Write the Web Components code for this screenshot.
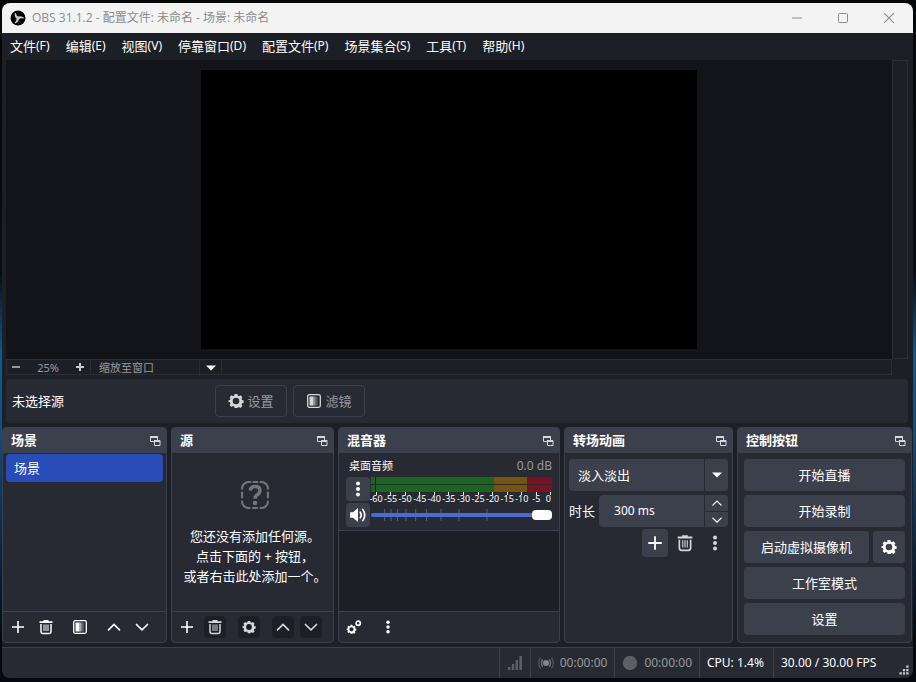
<!DOCTYPE html>
<html lang="zh-CN">
<head>
<meta charset="utf-8">
<title>OBS 31.1.2</title>
<style>
:root{
  --bg:#1d1f26;--panel:#272a33;--raise:#3c404d;--line:#3c404d;--soft:#2a2d36;
  --preview:#13141a;--accent:#284cb8;--text:#fff;--dim:#999a9e;
}
html,body{height:100%}
body{
  margin:0;box-sizing:border-box;padding:3px 3px 4px 2px;
  background:linear-gradient(180deg,#050608 0%,#0a0d12 40%,#0c5a94 52%,#0b5288 62%,#0a2c4d 78%,#05080c 94%);
  font:13px/20px "Noto Sans","Noto Sans CJK SC",sans-serif;color:var(--text);
}
</style>
</head>
<body>
<obs-window></obs-window>
<script>
const GEAR='<path fill-rule="evenodd" d="M6.6 1h2.8l.4 1.7 1.2.5 1.5-.9 1.9 1.9-.9 1.5.5 1.2 1.6.3v2.7l-1.6.4-.5 1.2.9 1.5-1.9 1.9-1.5-.9-1.2.5L9.4 15H6.600l-.4-1.500-1.200-.5-1.500.9-1.900-1.900.9-1.500-.5-1.200-1.500-.4V7.200l1.500-.3.5-1.200-.9-1.500 1.900-1.900 1.500.9 1.200-.5zM8 4.700a3.300 3.300 0 1 0 0 6.600 3.300 3.300 0 0 0 0-6.600z"/>';
const BLADE='M8 8.300Q4.900 7.200 5.300 3.500M5.300 3.500Q5.900 6.400 8.300 7.100';
const ICONS={
  plus:'<path d="M7.200 2h1.600v5.200H14v1.600H8.800V14H7.200V8.800H2V7.200h5.200z"/>',
  smallplus:'<path d="M7 4h2v3h3v2H9v3H7V9H4V7h3z"/>',
  minus:'<path d="M4 7h8v2H4z"/>',
  trash:'<path d="M5.500 1h5v1.200H14.500v1.800H1.500V2.200h4z"/><path d="M3 5v7.500a2 2 0 0 0 2 2h6a2 2 0 0 0 2-2V5" fill="none" stroke="currentColor" stroke-width="1.500"/><path d="M5.500 5.500h1V12h-1zM7.500 5.500h1V12h-1zM9.500 5.500h1V12h-1z"/>',
  filter:'<rect x="1.700" y="1.700" width="12.600" height="12.600" rx="1.500" fill="none" stroke="currentColor" stroke-width="1.300"/><path d="M3.500 3.500h4v9h-4z"/><path d="M7.500 3.500h1.500v9H7.500z" opacity=".6"/><path d="M9 3.500h1.500v9H9z" opacity=".4"/><path d="M10.500 3.500H12v9h-1.500z" opacity=".2"/>',
  up:'<path d="M2.500 10.800 8 5.500l5.500 5.300" fill="none" stroke="currentColor" stroke-width="1.700" stroke-linecap="round"/>',
  down:'<path d="M2.500 5.500 8 10.800l5.500-5.300" fill="none" stroke="currentColor" stroke-width="1.700" stroke-linecap="round"/>',
  gear:GEAR,
  cogs:'<g transform="translate(.3 5.200) scale(.64)">'+GEAR+'</g><circle cx="12.200" cy="4.300" r="2.100" fill="none" stroke="currentColor" stroke-width="1.700"/>',
  dots:'<circle cx="8" cy="2.500" r="2"/><circle cx="8" cy="8" r="2"/><circle cx="8" cy="13.500" r="2"/>',
  speaker:'<path d="M1 5.500h2.500L8 1.800v12.400L3.500 10.500H1z"/><path d="M10 5.500q1.800 2.500 0 5M12.200 3q3.600 5 0 10" fill="none" stroke="currentColor" stroke-width="1.500" stroke-linecap="round"/>',
  popout:'<path d="M7 8.500H3.500v-5h7V7" fill="none" stroke="currentColor"/><path d="M3 3h8v2H3zM7 7h6v2H7z"/><path d="M7.500 7.500h5.500v5H7.500z" fill="none" stroke="currentColor"/>',
  unknown:'<path d="M6 1.100h-1.500A3.400 3.400 0 0 0 1.100 4.500V5M6.700 1.100h3M10.500 1.100h1A3.400 3.400 0 0 1 14.900 4.500V5M14.900 6.300v3.400M14.900 11v.5a3.400 3.400 0 0 1-3.400 3.400H10.500M9.500 14.900h-3M5.500 14.900H4.500A3.400 3.400 0 0 1 1.100 11.500V11M1.100 9.700V6.300" fill="none" stroke="currentColor" stroke-width="1.100"/><path d="M5.500 5.600Q5.700 3.500 8.100 3.500q2.500 0 2.500 2.200 0 1.300-1.400 2.200Q8 8.700 8 10" fill="none" stroke="currentColor" stroke-width="1.900"/><circle cx="8" cy="12.200" r="1.200"/>',
  tri:'<path d="M3 5.500h10L8 10.500z"/>',
  bars:'<path d="M1 12h2.400v3H1zM4.800 9h2.400v6H4.800zM8.600 5H11v10H8.600zM12.400 1h2.600v14h-2.600z"/>',
  stream:'<circle cx="8" cy="8" r="3" fill="#85878c"/><path d="M4.700 4.300q-2.400 3.700 0 7.400M11.300 4.300q2.400 3.700 0 7.400" fill="none" stroke="#74767c" stroke-width="1.400"/><path d="M2.500 2.500q-3.600 5.500 0 11M13.500 2.500q3.600 5.500 0 11" fill="none" stroke="#4c4f58" stroke-width="1.400"/>',
  record:'<circle cx="8" cy="8" r="7.200"/>',
  grip:'<path d="M11 2h3v3h-3zM11 6.500h3v3h-3zM11 11h3v3h-3zM6.500 6.500h3v3h-3zM6.500 11h3v3h-3zM2 11h3v3H2z"/>',
  min:'<path d="M3 7.500h10v1H3z"/>',
  max:'<rect x="3.500" y="3.500" width="9" height="9" rx="1" fill="none" stroke="currentColor"/>',
  close:'<path d="m3.200 3.200 9.600 9.600m0-9.600-9.600 9.600" stroke="currentColor" stroke-width="1.100"/>',
  obs:'<circle cx="8" cy="8" r="7.500" fill="#000"/><g fill="none" stroke="#ccc" stroke-width="1.200" stroke-linecap="round">'+[0,120,240].map(r=>`<path d="${BLADE}" transform="rotate(${r} 8 8)"/>`).join('')+'</g>'
};
const RESET=`*{box-sizing:border-box}
button,input,select{font:inherit;color:inherit;margin:0;padding:0;border:0;background:none;appearance:none;outline:0;min-width:0}
button{display:inline-flex;align-items:center;justify-content:center}`;
function define(name,css,html){
  customElements.define(name,class extends HTMLElement{
    constructor(){
      super();
      const t=document.createElement('template');
      t.innerHTML=`<style>${RESET}${css}</style>${html}`;
      this.attachShadow({mode:'open'}).append(t.content.cloneNode(true));
    }
  });
}
customElements.define('obs-icon',class extends HTMLElement{
  connectedCallback(){
    if(this.shadowRoot)return;
    const s=this.getAttribute('size')||16;
    this.attachShadow({mode:'open'}).innerHTML=`<style>:host{display:inline-flex;flex:none}svg{display:block;fill:currentColor}</style><svg width="${s}" height="${s}" viewBox="0 0 16 16" aria-hidden="true">${ICONS[this.getAttribute('name')]}</svg>`;
  }
});
customElements.define('obs-tool',class extends HTMLElement{
  connectedCallback(){
    if(this.shadowRoot)return;
    this.attachShadow({mode:'open'}).innerHTML=`<style>${RESET}
    :host{display:inline-flex;width:22px;height:22px}
    button{width:100%;height:100%;border-radius:4px}
    :host([dark]) button{background:var(--bg);color:#d6d7da}
    :host([raised]) button{background:var(--raise)}
    :host([gap]){margin-left:6px}</style>
    <button aria-label="${this.getAttribute('label')}"><obs-icon name="${this.getAttribute('icon')}" size="${this.getAttribute('size')||16}"></obs-icon></button>`;
  }
});
customElements.define('obs-dock',class extends HTMLElement{
  connectedCallback(){
    if(this.shadowRoot)return;
    this.attachShadow({mode:'open'}).innerHTML=`<style>${RESET}
    :host{display:flex;flex-direction:column;min-width:0;background:var(--panel);border:1px solid var(--line);border-radius:4px;overflow:hidden}
    header{display:flex;align-items:center;justify-content:space-between;background:var(--raise);height:25px;flex:none;padding:0 3px 0 8px;color:#fff}
    h2{margin:0;padding-bottom:2px;font-size:13px;line-height:20px;font-weight:700}
    header button{color:#d6d7da}
    .body{flex:1;display:flex;flex-direction:column;min-height:0}
    footer{display:flex;align-items:center;gap:6px;height:31px;padding:0 4px;border-top:1px solid var(--line)}
    :host([plain]) footer{display:none}</style>
    <header><h2>${this.getAttribute('heading')}</h2><button aria-label="浮动"><obs-icon name="popout"></obs-icon></button></header>
    <div class="body"><slot></slot></div><footer><slot name="tools"></slot></footer>`;
  }
});
define('obs-titlebar',`
:host{display:flex;align-items:center;height:30px;flex:none;background:#f3f3f3;color:#8b8b8b;padding:0 1px 0 8px;border-radius:8px 8px 0 0}
h1{flex:1;margin:0 0 0 6px;font:12px/16px "Open Sans","Noto Sans CJK SC",sans-serif}
button{width:46px;height:30px}`,
`<obs-icon name="obs" size="16"></obs-icon><h1>OBS 31.1.2 - 配置文件: 未命名 - 场景: 未命名</h1>
<button aria-label="最小化"><obs-icon name="min"></obs-icon></button><button aria-label="最大化"><obs-icon name="max"></obs-icon></button><button aria-label="关闭"><obs-icon name="close"></obs-icon></button>`);
define('obs-menubar',`
:host{display:block;flex:none}
nav{display:flex;height:27px;padding-bottom:2px}
button{padding:0 8px;white-space:nowrap}
span{font-size:12px}`,
`<nav>${[['文件','F'],['编辑','E'],['视图','V'],['停靠窗口','D'],['配置文件','P'],['场景集合','S'],['工具','T'],['帮助','H']].map(([t,k])=>`<button>${t}<span>(${k})</span></button>`).join('')}</nav>`);
define('obs-preview',`
:host{display:grid;grid-template:minmax(0,1fr) 16px / minmax(0,1fr) 16px;flex:1;min-height:0;margin:0 5px 0 4px}
.stage{background:var(--preview);padding:10px;display:flex;justify-content:center;min-height:0}
.canvas{height:100%;aspect-ratio:16/9;background:#000}
.vbar{border:1px solid var(--soft)}
.hbar{display:flex;align-items:stretch;border:1px solid var(--soft);font-size:11px;line-height:16px;color:var(--dim)}
.hbar button{width:18px}
.hbar .in{color:#c8c9cc}
.pct{width:46px;text-align:center}
.pick{display:grid;grid-template-columns:108px 22px;border:1px solid var(--soft);border-width:0 1px;margin-left:1px}
.pick select{grid-area:1/1/2/3;padding-left:8px}
.pick i{grid-area:1/2;display:grid;place-items:center;border-left:1px solid var(--soft);color:#fff;pointer-events:none}`,
`<div class="stage"><div class="canvas"></div></div><div class="vbar"></div>
<div class="hbar"><button aria-label="缩小"><obs-icon name="minus"></obs-icon></button><span class="pct">25%</span><button class="in" aria-label="放大"><obs-icon name="smallplus"></obs-icon></button>
<div class="pick"><select aria-label="预览缩放"><option>缩放至窗口</option></select><i><obs-icon name="tri"></obs-icon></i></div></div>`);
define('obs-context',`
:host{display:flex;align-items:center;gap:6px;flex:none;height:44px;margin:0 5px 0 4px;padding-left:6px;background:var(--panel);border-radius:4px}
span{width:197px}
button{width:72px;height:32px;gap:3px;border:1px solid var(--line);border-radius:4px;color:var(--dim)}
obs-icon{color:#d6d7da}`,
`<span>未选择源</span><button><obs-icon name="gear"></obs-icon>设置</button><button><obs-icon name="filter"></obs-icon>滤镜</button>`);
define('obs-scenes',`
:host{display:block;padding:1px 3px}
ul{margin:0;padding:0;list-style:none}
li{display:flex}
button{width:100%;height:28px;border-radius:4px;background:var(--accent);justify-content:flex-start;padding:0 8px 1px}`,
`<ul><li><button>场景</button></li></ul>`);
define('obs-empty',`
:host{display:flex;flex:1;flex-direction:column;align-items:center;justify-content:center;gap:16px;padding:2px 0 0 5px}
obs-icon{color:#74767c}
p{margin:0;text-align:center;white-space:nowrap}`,
`<obs-icon name="unknown" size="30"></obs-icon><p>您还没有添加任何源。<br>点击下面的 + 按钮，<br>或者右击此处添加一个。</p>`);
define('obs-mixer',`
:host{display:flex;flex:1;flex-direction:column}
.track{padding:2px 7px 3px;border-bottom:1px solid var(--line)}
.top{display:flex;justify-content:space-between;align-items:center;height:22px;padding-left:3px}
.top b{font-weight:400;font-size:11px;line-height:20px}
.top span{color:var(--dim);font-size:12px}
.row{display:grid;grid-template:24px 24px / 24px minmax(0,1fr);column-gap:1px;row-gap:2px}
obs-tool{width:24px;height:24px}
.meter{display:grid;grid-template-rows:7px 7px 8px;row-gap:1px}
.bar{background:linear-gradient(90deg,#1a661f 0 2%,var(--bg) 2% 3%,#1a661f 3% 68%,#76530f 68% 86%,#7c1023 86%)}
.scale{display:flex;justify-content:space-between;padding:0 1px 0 5px;font-size:9px;line-height:10px;margin-top:-1px}
.scale span{width:0;display:flex;flex-direction:column;align-items:center}
.scale span::before{content:"";width:1px;height:3px;background:#e8e8e8;margin-bottom:-1px;flex:none}
.scale span:last-child{align-items:flex-end}
.vol{display:grid;align-items:center}
.vol>*{grid-area:1/1;width:100%}
.vol svg{height:12px}
input{height:24px}
input::-webkit-slider-runnable-track{height:4px;border-radius:2px;background:#476bd7}
input::-webkit-slider-thumb{appearance:none;width:20px;height:10px;margin-top:-3px;border-radius:4px;background:#fff}
.rest{flex:1;background:var(--bg)}`,
`<div class="track"><div class="top"><b>桌面音频</b><span>0.0 dB</span></div>
<div class="row"><obs-tool raised icon="dots" label="选项"></obs-tool>
<div class="meter"><div class="bar"></div><div class="bar"></div><div class="scale">${[-60,-55,-50,-45,-40,-35,-30,-25,-20,-15,-10,-5,0].map(n=>`<span>${n}</span>`).join('')}</div></div>
<obs-tool raised icon="speaker" size="18" label="静音"></obs-tool>
<div class="vol"><svg aria-hidden="true">${[7.3,10.8,14.4,19,24.4,30.4,38.4,48.3,63.8].map(x=>`<rect x="${x}%" width="1" height="12" fill="#5c606e"/>`).join('')}</svg><input type="range" min="0" max="100" value="100" aria-label="桌面音频 音量"></div></div></div>
<div class="rest"></div>`);
define('obs-transitions',`
:host{display:flex;flex-direction:column;gap:4px;padding:6px 4px}
.pick,.spin{display:grid;grid-template-columns:minmax(0,1fr) 24px;height:32px;background:var(--raise);border-radius:4px}
.pick select{grid-area:1/1/2/3;padding-left:9px}
.pick i{grid-area:1/2;display:grid;place-items:center;border-left:1px solid var(--panel);pointer-events:none}
.row{display:flex;align-items:center;gap:4px}
.spin{flex:1}
input{padding-left:15px;width:100%;font-size:12px}
.arrows{display:grid;grid-template-rows:1fr 1fr;border-left:1px solid var(--panel)}
.arrows button+button{border-top:1px solid var(--panel)}
.tools{display:flex;justify-content:flex-end;gap:4px;margin-top:-2px}
.tools obs-tool{width:26px;height:28px;color:#d6d7da}
.tools obs-tool:first-child{color:#fff}`,
`<div class="pick"><select aria-label="转场动画"><option>淡入淡出</option></select><i><obs-icon name="tri"></obs-icon></i></div>
<div class="row"><label for="dur">时长</label><div class="spin"><input id="dur" value="300 ms"><div class="arrows"><button aria-label="增加"><obs-icon name="up" size="12"></obs-icon></button><button aria-label="减少"><obs-icon name="down" size="12"></obs-icon></button></div></div></div>
<div class="tools"><obs-tool raised icon="plus" size="18" label="添加"></obs-tool><obs-tool icon="trash" size="18" label="删除"></obs-tool><obs-tool icon="dots" label="更多"></obs-tool></div>`);
define('obs-controls',`
:host{display:flex;flex-direction:column;gap:4px;padding:6px}
button,obs-tool{height:32px;border-radius:4px;background:var(--raise)}
.row{display:flex;gap:4px}
.row button{flex:1}
obs-tool{width:32px}`,
`<button>开始直播</button><button>开始录制</button><div class="row"><button>启动虚拟摄像机</button><obs-tool raised icon="gear" label="虚拟摄像机设置"></obs-tool></div><button>工作室模式</button><button>设置</button>`);
define('obs-status',`
:host{display:flex;justify-content:flex-end;flex:none;height:31px;background:var(--panel);border-top:1px solid var(--line);border-radius:0 0 8px 8px;font-size:12px}
div{display:flex;align-items:center;gap:6px;padding:0 7px;border-left:1px solid var(--line);white-space:nowrap}
.dim{color:var(--dim)}
obs-icon{color:#5d5f66}
.cpu{min-width:74px}
.fps{min-width:140px;justify-content:space-between;padding-right:3px}
.fps obs-icon{align-self:flex-end;color:#c8c9cc;margin-bottom:2px}`,
`<div><obs-icon name="bars"></obs-icon></div><div class="dim"><obs-icon name="stream"></obs-icon>00:00:00</div><div class="dim"><obs-icon name="record"></obs-icon>00:00:00</div><div class="cpu">CPU: 1.4%</div><div class="fps">30.00 / 30.00 FPS<obs-icon name="grip" size="12"></obs-icon></div>`);
define('obs-window',`
:host{display:flex;flex-direction:column;height:100%;background:var(--bg);border-radius:8px}
obs-context{margin-top:4px}
main{display:grid;grid-template-columns:165fr 163fr 222fr 169fr 175fr;grid-template-rows:216px;gap:4px;margin:4px 1px 4px 0}
`,
`<obs-titlebar></obs-titlebar><obs-menubar></obs-menubar><obs-preview></obs-preview><obs-context></obs-context>
<main>
<obs-dock heading="场景"><obs-scenes></obs-scenes>
<obs-tool slot="tools" icon="plus" label="添加场景"></obs-tool><obs-tool slot="tools" icon="trash" label="删除场景"></obs-tool><obs-tool slot="tools" gap icon="filter" label="场景滤镜"></obs-tool><obs-tool slot="tools" gap icon="up" label="上移"></obs-tool><obs-tool slot="tools" icon="down" label="下移"></obs-tool></obs-dock>
<obs-dock heading="源"><obs-empty></obs-empty>
<obs-tool slot="tools" icon="plus" label="添加源"></obs-tool><obs-tool slot="tools" dark icon="trash" label="删除源"></obs-tool><obs-tool slot="tools" dark gap icon="gear" size="14" label="源属性"></obs-tool><obs-tool slot="tools" dark gap icon="up" label="上移"></obs-tool><obs-tool slot="tools" dark icon="down" label="下移"></obs-tool></obs-dock>
<obs-dock heading="混音器"><obs-mixer></obs-mixer>
<obs-tool slot="tools" icon="cogs" label="高级音频属性"></obs-tool><obs-tool slot="tools" gap icon="dots" size="14" label="更多"></obs-tool></obs-dock>
<obs-dock plain heading="转场动画"><obs-transitions></obs-transitions></obs-dock>
<obs-dock plain heading="控制按钮"><obs-controls></obs-controls></obs-dock>
</main>
<obs-status></obs-status>`);
</script>
</body>
</html>
